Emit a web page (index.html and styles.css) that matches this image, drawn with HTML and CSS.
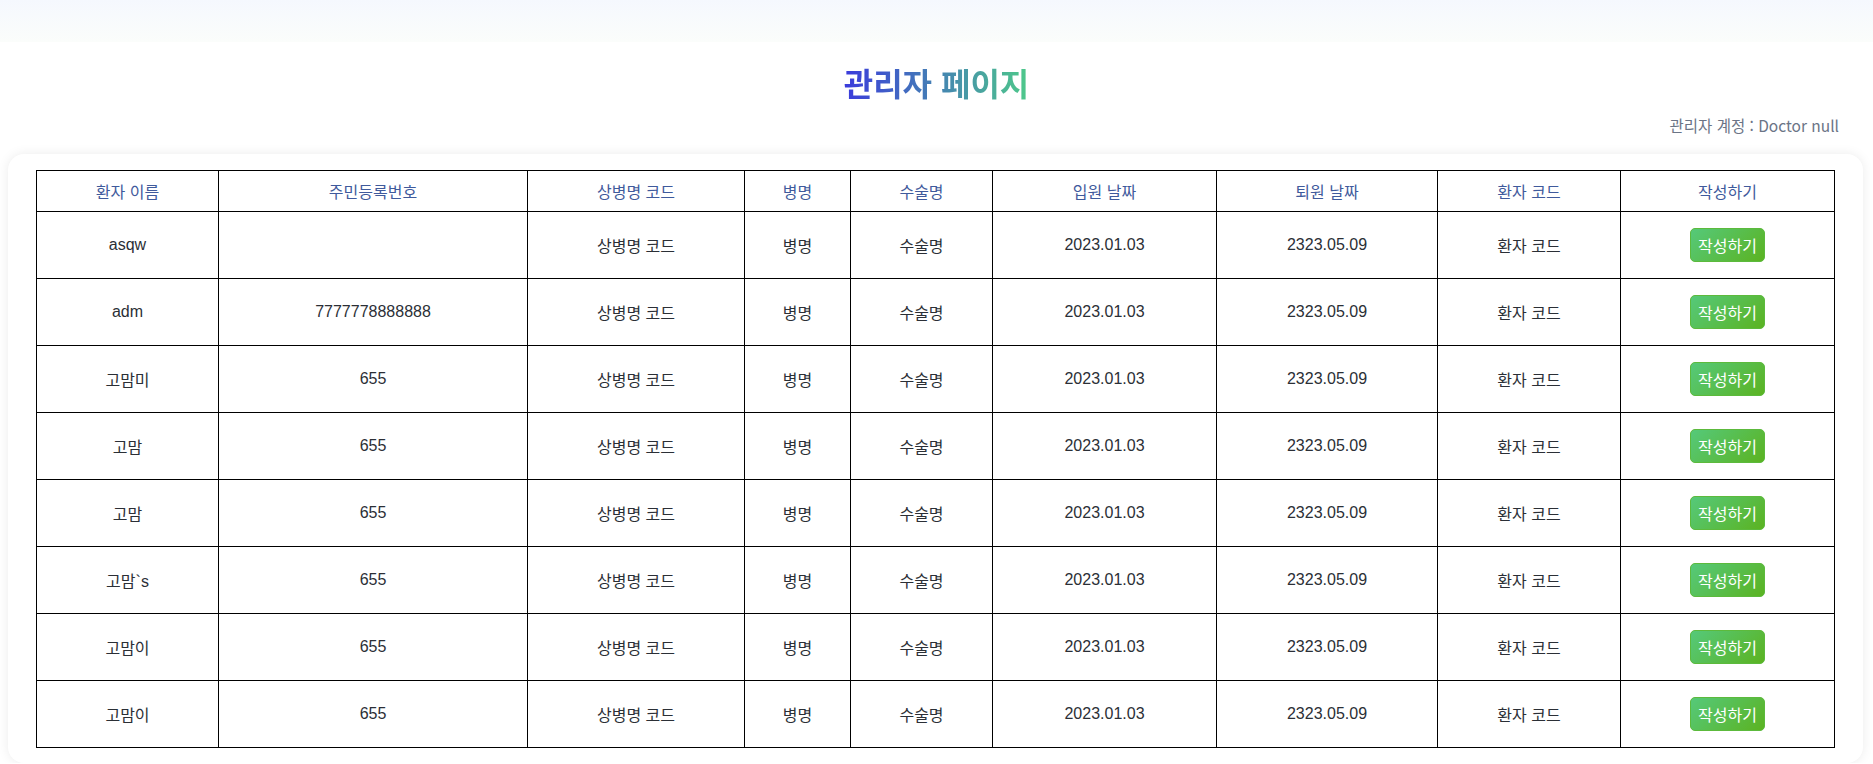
FILE: index.html
```html
<!DOCTYPE html>
<html lang="ko">
<head>
  <meta charset="UTF-8" />
  <meta name="viewport" content="width=device-width, initial-scale=1.0"/>
  <title>관리자 페이지</title>
  <link rel="stylesheet" href="styles.css">
</head>
<body>

  <div class="top-bar"></div>

  <h1 class="page-title">관리자 페이지</h1>
  <div class="account">관리자 계정 : Doctor null</div>

  <div class="card">
    <table class="patient-table">
      <colgroup>
        <col class="c-name">
        <col class="c-rrn">
        <col class="c-code">
        <col class="c-dis">
        <col class="c-op">
        <col class="c-in">
        <col class="c-out">
        <col class="c-pcode">
        <col class="c-write">
      </colgroup>
      <thead>
        <tr>
          <th>환자 이름</th>
          <th>주민등록번호</th>
          <th>상병명 코드</th>
          <th>병명</th>
          <th>수술명</th>
          <th>입원 날짜</th>
          <th>퇴원 날짜</th>
          <th>환자 코드</th>
          <th>작성하기</th>
        </tr>
      </thead>
      <tbody id="patientRows">
        <tr>
          <td>asqw</td><td></td><td>상병명 코드</td><td>병명</td><td>수술명</td>
          <td>2023.01.03</td><td>2323.05.09</td><td>환자 코드</td>
          <td><button class="write-btn">작성하기</button></td>
        </tr>
        <tr>
          <td>adm</td><td>7777778888888</td><td>상병명 코드</td><td>병명</td><td>수술명</td>
          <td>2023.01.03</td><td>2323.05.09</td><td>환자 코드</td>
          <td><button class="write-btn">작성하기</button></td>
        </tr>
        <tr>
          <td>고맘미</td><td>655</td><td>상병명 코드</td><td>병명</td><td>수술명</td>
          <td>2023.01.03</td><td>2323.05.09</td><td>환자 코드</td>
          <td><button class="write-btn">작성하기</button></td>
        </tr>
        <tr>
          <td>고맘</td><td>655</td><td>상병명 코드</td><td>병명</td><td>수술명</td>
          <td>2023.01.03</td><td>2323.05.09</td><td>환자 코드</td>
          <td><button class="write-btn">작성하기</button></td>
        </tr>
        <tr>
          <td>고맘</td><td>655</td><td>상병명 코드</td><td>병명</td><td>수술명</td>
          <td>2023.01.03</td><td>2323.05.09</td><td>환자 코드</td>
          <td><button class="write-btn">작성하기</button></td>
        </tr>
        <tr>
          <td>고맘`s</td><td>655</td><td>상병명 코드</td><td>병명</td><td>수술명</td>
          <td>2023.01.03</td><td>2323.05.09</td><td>환자 코드</td>
          <td><button class="write-btn">작성하기</button></td>
        </tr>
        <tr>
          <td>고맘이</td><td>655</td><td>상병명 코드</td><td>병명</td><td>수술명</td>
          <td>2023.01.03</td><td>2323.05.09</td><td>환자 코드</td>
          <td><button class="write-btn">작성하기</button></td>
        </tr>
        <tr>
          <td>고맘이</td><td>655</td><td>상병명 코드</td><td>병명</td><td>수술명</td>
          <td>2023.01.03</td><td>2323.05.09</td><td>환자 코드</td>
          <td><button class="write-btn">작성하기</button></td>
        </tr>
      </tbody>
    </table>
  </div>

</body>
</html>
```

FILE: styles.css
```css
body {
  font-family: 'Noto Sans CJK KR', 'Noto Sans', sans-serif;
  margin: 0;
  padding: 0;
  background: #ffffff;
  color: #212529;
}

/* light strip at the very top */
.top-bar {
  height: 42px;
  background: linear-gradient(to bottom, #f5f8fe, #fbfdfb);
}

.page-title {
  margin: 15px auto 0;
  width: fit-content;
  height: 50px;
  line-height: 50px;
  font-size: 32px;
  font-weight: bold;
  background: linear-gradient(to right, #3b3bdc, #4ec98a);
  -webkit-background-clip: text;
  background-clip: text;
  color: transparent;
}

.account {
  text-align: right;
  font-size: 15.5px;
  color: #6b7486;
  padding-right: 34px;
  margin-top: 7px;
  line-height: 22px;
}

.card {
  background: #ffffff;
  margin: 18px 10px 0 8px;
  padding: 16px 28px 15px;
  border-radius: 16px;
  box-shadow: 0 0 12px rgba(0, 0, 0, 0.08);
}

.patient-table {
  width: 100%;
  border-collapse: collapse;
  table-layout: fixed;
  text-align: center;
  font-size: 16px;
}

.c-name { width: 182px; }
.c-rrn { width: 309px; }
.c-code { width: 217px; }
.c-dis { width: 106px; }
.c-op { width: 142px; }
.c-in { width: 224px; }
.c-out { width: 221px; }
.c-pcode { width: 183px; }
.c-write { width: 214px; }

.patient-table th,
.patient-table td {
  border: 1px solid #000;
  padding: 0;
}

.patient-table th {
  height: 40px;
  font-size: 16px;
  font-weight: 400;
  color: #3f5a9c;
}

.patient-table td {
  height: 66px;
  color: #2b2f36;
  font-family: 'Liberation Sans', 'Noto Sans CJK KR', sans-serif;
}

.write-btn {
  font-family: 'Noto Sans CJK KR', sans-serif;
  font-size: 16px;
  color: #ffffff;
  background: linear-gradient(135deg, #55c97a, #5bb321);
  border: 1px solid #5cba3c;
  border-radius: 5px;
  width: 75px;
  height: 34px;
  padding: 0;
  cursor: pointer;
}

.write-btn:hover {
  background: #4aab2a;
}
```
